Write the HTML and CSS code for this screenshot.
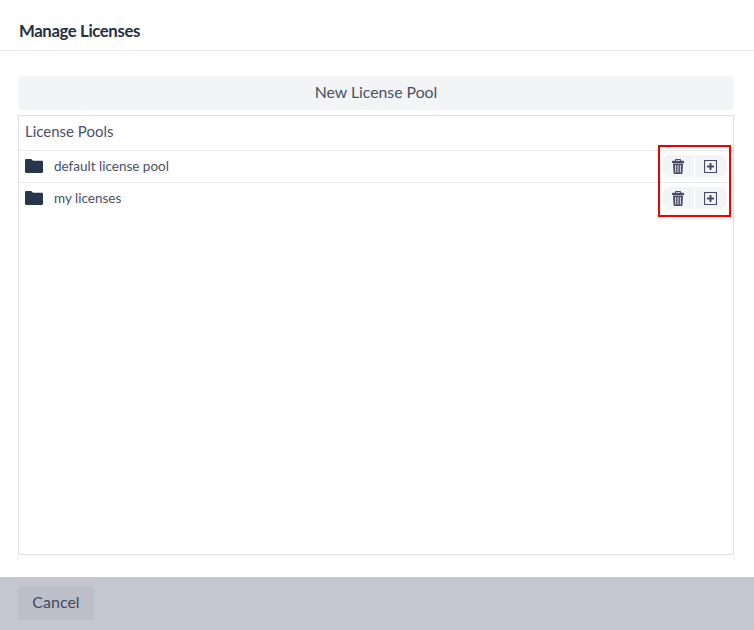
FILE: index.html
```html
<!DOCTYPE html>
<html lang="en">
<head>
<meta charset="utf-8">
<title>Manage Licenses</title>
<link rel="stylesheet" href="styles.css">
</head>
<body>
<div class="dialog">
  <header class="dialog-header"><h1 class="dialog-title">Manage Licenses</h1></header>
  <main class="dialog-body">
    <button class="new-pool">New License Pool</button>
    <section class="panel">
      <h2 class="panel-title">License Pools</h2>
      <ul class="pool-list">
      <li class="pool-row">
        <svg class="folder" viewBox="0 0 18 14"><path d="M0 1.200C0 .5.500 0 1.200 0h5l1.800 1.800h8.800c.7 0 1.200.5 1.200 1.200v9.800c0 .7-.5 1.200-1.200 1.200H1.200C.5 14 0 13.500 0 12.800z"/></svg>
        <span class="pool-name">default license pool</span>
        <div class="actions">
          <button class="action action-left"><svg class="icon-trash" viewBox="0 0 12 15"><path d="M4 0h4c.6 0 1 .4 1 1v.8h2.200c.4 0 .8.400.8.800V4H0V2.600c0-.4.4-.8.800-.8H3V1c0-.6.400-1 1-1zM4 1v.8h4V1zM1 4.600h10l-.5 9.500c0 .5-.5.900-1 .9h-7c-.5 0-1-.4-1-.9zM3.200 6v7.500h.9V6zm2.350 0v7.500h.9V6zm2.350 0v7.500h.9V6z" fill-rule="evenodd"/></svg></button>
          <button class="action action-right"><svg class="icon-plus" viewBox="0 0 13 13"><path d="M0 0h13v13H0zM1.100 1.100v10.800h10.800V1.100zM5.500 3h2v2.500H10v2H7.500V10h-2V7.500H3v-2h2.500z" fill-rule="evenodd"/></svg></button>
        </div>
      </li>
      <li class="pool-row">
        <svg class="folder" viewBox="0 0 18 14"><path d="M0 1.200C0 .5.500 0 1.200 0h5l1.800 1.800h8.800c.7 0 1.200.5 1.200 1.200v9.800c0 .7-.5 1.200-1.200 1.200H1.200C.5 14 0 13.500 0 12.800z"/></svg>
        <span class="pool-name">my licenses</span>
        <div class="actions">
          <button class="action action-left"><svg class="icon-trash" viewBox="0 0 12 15"><path d="M4 0h4c.6 0 1 .4 1 1v.8h2.200c.4 0 .8.400.8.800V4H0V2.600c0-.4.4-.8.800-.8H3V1c0-.6.400-1 1-1zM4 1v.8h4V1zM1 4.600h10l-.5 9.500c0 .5-.5.900-1 .9h-7c-.5 0-1-.4-1-.9zM3.200 6v7.500h.9V6zm2.350 0v7.500h.9V6zm2.350 0v7.500h.9V6z" fill-rule="evenodd"/></svg></button>
          <button class="action action-right"><svg class="icon-plus" viewBox="0 0 13 13"><path d="M0 0h13v13H0zM1.100 1.100v10.800h10.800V1.100zM5.500 3h2v2.500H10v2H7.500V10h-2V7.500H3v-2h2.500z" fill-rule="evenodd"/></svg></button>
        </div>
      </li>
      </ul>
      <div class="highlight"></div>
    </section>
  </main>
  <footer class="dialog-footer"><button class="cancel">Cancel</button></footer>
</div>
</body>
</html>
```
FILE: styles.css
```css
* { box-sizing: border-box; }
html, body { margin: 0; height: 100%; background: #fff; }
body { font-family: "Lato", "Open Sans", sans-serif; color: #4a5065; }
.dialog { width: 754px; height: 630px; display: flex; flex-direction: column; overflow: hidden; }
.dialog-header { height: 51px; flex: none; border-bottom: 1px solid #e8e9ef; padding: 10px 19px 0; display: flex; align-items: center; }
.dialog-title { margin: 0; font-size: 16.800px; font-weight: 700; color: #27303f; letter-spacing: -0.4px; }
.dialog-body { flex: 1; padding: 25px 20px 22px 18px; display: flex; flex-direction: column; gap: 5px; min-height: 0; }
.new-pool { height: 34px; flex: none; border: 0; border-radius: 4px; background: #f3f4f6; padding: 0 0 4px; font: inherit; font-size: 15.800px; color: #4a5065; }
.panel { position: relative; flex: 1; border: 1px solid #dfe0e6; min-height: 0; }
.panel-title { margin: 0; height: 35px; padding: 0 6px 4px; display: flex; align-items: center; font-size: 15px; font-weight: 400; color: #4a5065; border-bottom: 1px solid #e8e9ef; }
.pool-list { list-style: none; margin: 0; padding: 0; }
.pool-row { height: 32px; display: flex; align-items: center; padding: 0 6px 1px; border-bottom: 1px solid #e8e9ef; font-size: 13.500px; color: #4a5065; }
.pool-row:last-child { border-bottom-color: transparent; }
.folder { width: 18px; height: 14px; fill: #27364b; flex: none; }
.pool-name { margin-left: 11px; flex: 1; }
.actions { display: flex; gap: 1px; }
.action { width: 32px; height: 22px; border: 0; padding: 0; background: #f3f4f6; display: flex; align-items: center; justify-content: center; }
.action-left { border-radius: 8px 0 0 8px; }
.action-right { border-radius: 0 8px 8px 0; padding-right: 2px; }
.icon-trash { width: 12px; height: 15px; fill: #4a4a68; }
.icon-plus { width: 13px; height: 13px; fill: #4a4a68; }
.highlight { position: absolute; left: 639px; top: 29px; width: 73px; height: 72px; border: 2px solid #f00000; pointer-events: none; }
.dialog-footer { height: 53px; flex: none; background: #c5c6d0; padding: 9px 18px 10px; }
.cancel { width: 76px; height: 34px; border: 0; border-radius: 4px; background: #bcbfca; padding: 0 0 4px; font: inherit; font-size: 16px; color: #45475f; }
```
